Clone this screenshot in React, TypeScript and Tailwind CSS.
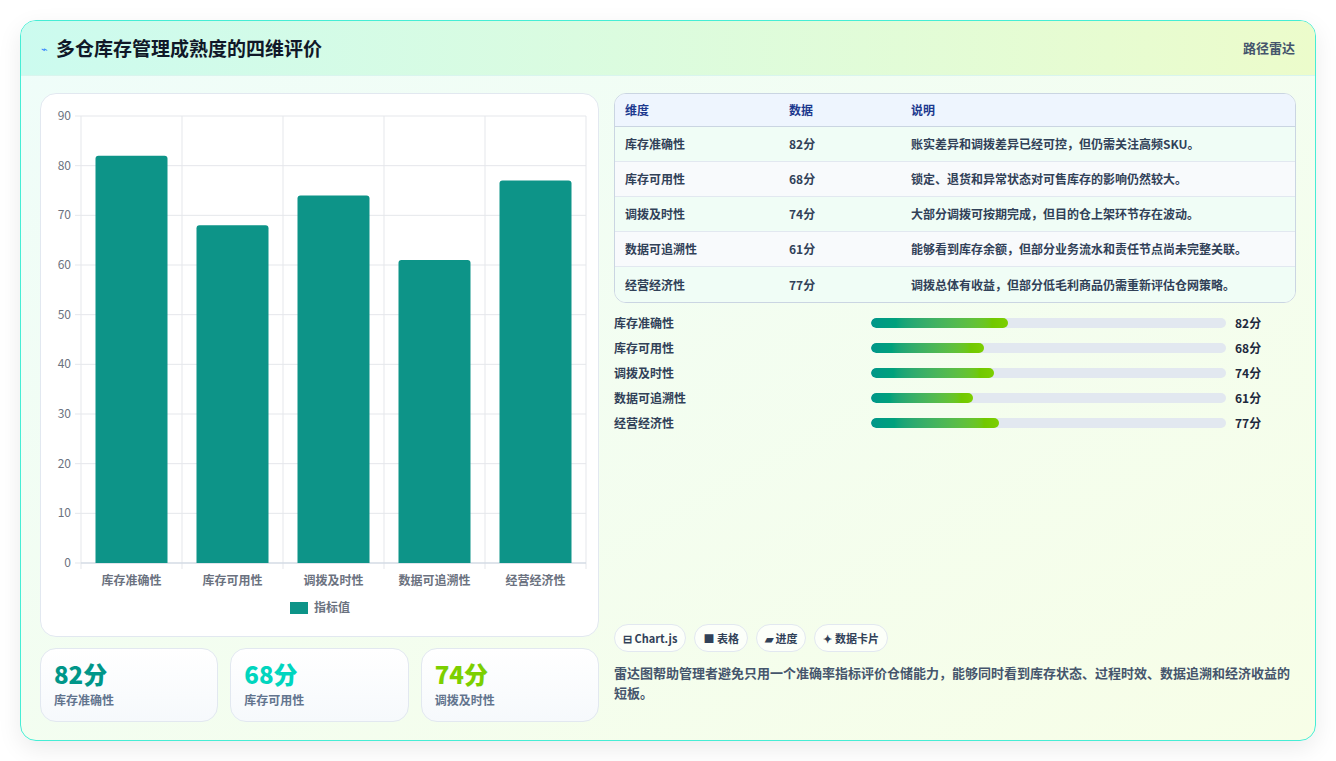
import React from 'react';

const rows = [
  { name: '库存准确性', score: 82, note: '账实差异和调拨差异已经可控，但仍需关注高频SKU。' },
  { name: '库存可用性', score: 68, note: '锁定、退货和异常状态对可售库存的影响仍然较大。' },
  { name: '调拨及时性', score: 74, note: '大部分调拨可按期完成，但目的仓上架环节存在波动。' },
  { name: '数据可追溯性', score: 61, note: '能够看到库存余额，但部分业务流水和责任节点尚未完整关联。' },
  { name: '经营经济性', score: 77, note: '调拨总体有收益，但部分低毛利商品仍需重新评估仓网策略。' },
];

const font = { fontFamily: '"Noto Sans CJK SC", "Liberation Sans", sans-serif' };

function BarChart() {
  const left = 40;
  const right = 545;
  const top = 22;
  const bottom = 469;
  const step = (bottom - top) / 9;
  const colW = (right - left) / 5;
  return (
    <svg width="558" height="543" className="block" style={font}>
      {Array.from({ length: 10 }).map((_, i) => {
        const y = bottom - i * step;
        return (
          <g key={i}>
            <line x1={left - 6} x2={right} y1={y} y2={y} stroke="#e5e7eb" />
            <text x={30} y={y + 4} fontSize="12" fill="#6b7280" textAnchor="end">{i * 10}</text>
          </g>
        );
      })}
      {Array.from({ length: 6 }).map((_, i) => (
        <line key={i} x1={left + i * colW} x2={left + i * colW} y1={top} y2={bottom + 6} stroke="#e5e7eb" />
      ))}
      <line x1={left} x2={right} y1={bottom} y2={bottom} stroke="#cbd5e1" />
      {rows.map((r, i) => {
        const h = (r.score / 10) * step;
        const cx = left + colW * i + colW / 2;
        return (
          <g key={r.name}>
            <path d={`M${cx - 36} ${bottom} V${bottom - h + 3} Q${cx - 36} ${bottom - h} ${cx - 33} ${bottom - h} H${cx + 33} Q${cx + 36} ${bottom - h} ${cx + 36} ${bottom - h + 3} V${bottom}Z`} fill="#0d9488" />
            <text x={cx} y={bottom + 22} fontSize="12" fontWeight="600" fill="#6b7280" textAnchor="middle">{r.name}</text>
          </g>
        );
      })}
      <rect x={249} y={508} width={18} height={12} fill="#0d9488" />
      <text x={273} y={518} fontSize="12" fontWeight="600" fill="#6b7280">指标值</text>
    </svg>
  );
}

export default function App() {
  return (
    <div className="min-h-screen bg-white pt-5 px-5" style={font}>
      <div className="w-[1296px] h-[721px] rounded-2xl border border-teal-300 overflow-hidden shadow-[0_8px_24px_rgba(0,0,0,0.08)] bg-gradient-to-br from-[#effdfa] to-[#f7fee7] flex flex-col">
        <div className="h-[55px] shrink-0 flex items-center justify-between px-5 bg-gradient-to-r from-[#ccfbef] to-[#ecfccb] border-b border-[#d9f5ee]">
          <div className="flex items-center gap-2">
            <span className="text-[11px] text-blue-500">⌁</span>
            <h1 className="text-[19px] font-bold text-gray-900">多仓库存管理成熟度的四维评价</h1>
          </div>
          <span className="text-[13px] font-semibold text-slate-600">路径雷达</span>
        </div>
        <div className="flex gap-[15px] px-[19px] pt-[17px]">
          <div className="w-[559px] flex flex-col gap-[11px]">
            <div className="h-[544px] bg-white rounded-2xl border border-slate-200">
              <BarChart />
            </div>
            <div className="grid grid-cols-3 gap-3">
              {[
                { v: '82分', l: '库存准确性', c: 'text-teal-600' },
                { v: '68分', l: '库存可用性', c: 'text-teal-400' },
                { v: '74分', l: '调拨及时性', c: 'text-lime-500' },
              ].map((s) => (
                <div key={s.l} className="h-[74px] rounded-2xl border border-slate-200 bg-gradient-to-b from-white to-[#f6f9fc] px-[13px] pt-[10px]">
                  <div className={`text-[24px] font-extrabold leading-[30px] ${s.c}`}>{s.v}</div>
                  <div className="text-[12px] font-semibold text-slate-500 mt-[2px]">{s.l}</div>
                </div>
              ))}
            </div>
          </div>
          <div className="w-[684px] flex flex-col">
            <div className="rounded-xl border border-slate-300 overflow-hidden bg-white">
              <div className="grid grid-cols-[164px_122px_1fr] h-[33px] items-center px-[10px] bg-[#eef5fe] border-b border-slate-300 text-[12px] font-semibold text-blue-900">
                <span>维度</span><span>数据</span><span>说明</span>
              </div>
              {rows.map((r, i) => (
                <div key={r.name} className={`grid grid-cols-[164px_122px_1fr] h-[35px] items-center px-[10px] text-[12px] font-semibold text-slate-700 ${i < 4 ? 'border-b border-slate-200' : ''} ${i % 2 === 0 ? 'bg-[#f0fdf6]' : 'bg-[#f8fafc]'}`}>
                  <span>{r.name}</span><span>{r.score}分</span><span>{r.note}</span>
                </div>
              ))}
            </div>
            <div className="flex flex-col gap-[9px] mt-[12px]">
              {rows.map((r) => (
                <div key={r.name} className="flex items-center h-[16px] text-[12px] font-semibold text-slate-700">
                  <span className="w-[257px]">{r.name}</span>
                  <div className="w-[355px] h-[10px] rounded-full bg-slate-200 overflow-hidden">
                    <div className="h-full rounded-full bg-gradient-to-r from-teal-600 to-lime-500" style={{ width: `${r.score * 0.47}%` }} />
                  </div>
                  <span className="ml-[9px] font-bold text-slate-800">{r.score}分</span>
                </div>
              ))}
            </div>
            <div className="mt-auto flex gap-[8px]">
              {['⊟ Chart.js', '■ 表格', '▰ 进度', '✦ 数据卡片'].map((t) => (
                <span key={t} className="h-[28px] px-[8px] flex items-center rounded-full border border-slate-200 bg-white/70 text-[11px] font-bold text-slate-700">{t}</span>
              ))}
            </div>
            <p className="mt-[11px] mb-[19px] text-[13px] font-semibold leading-[20px] text-slate-600">
              雷达图帮助管理者避免只用一个准确率指标评价仓储能力，能够同时看到库存状态、过程时效、数据追溯和经济收益的短板。
            </p>
          </div>
        </div>
      </div>
    </div>
  );
}
